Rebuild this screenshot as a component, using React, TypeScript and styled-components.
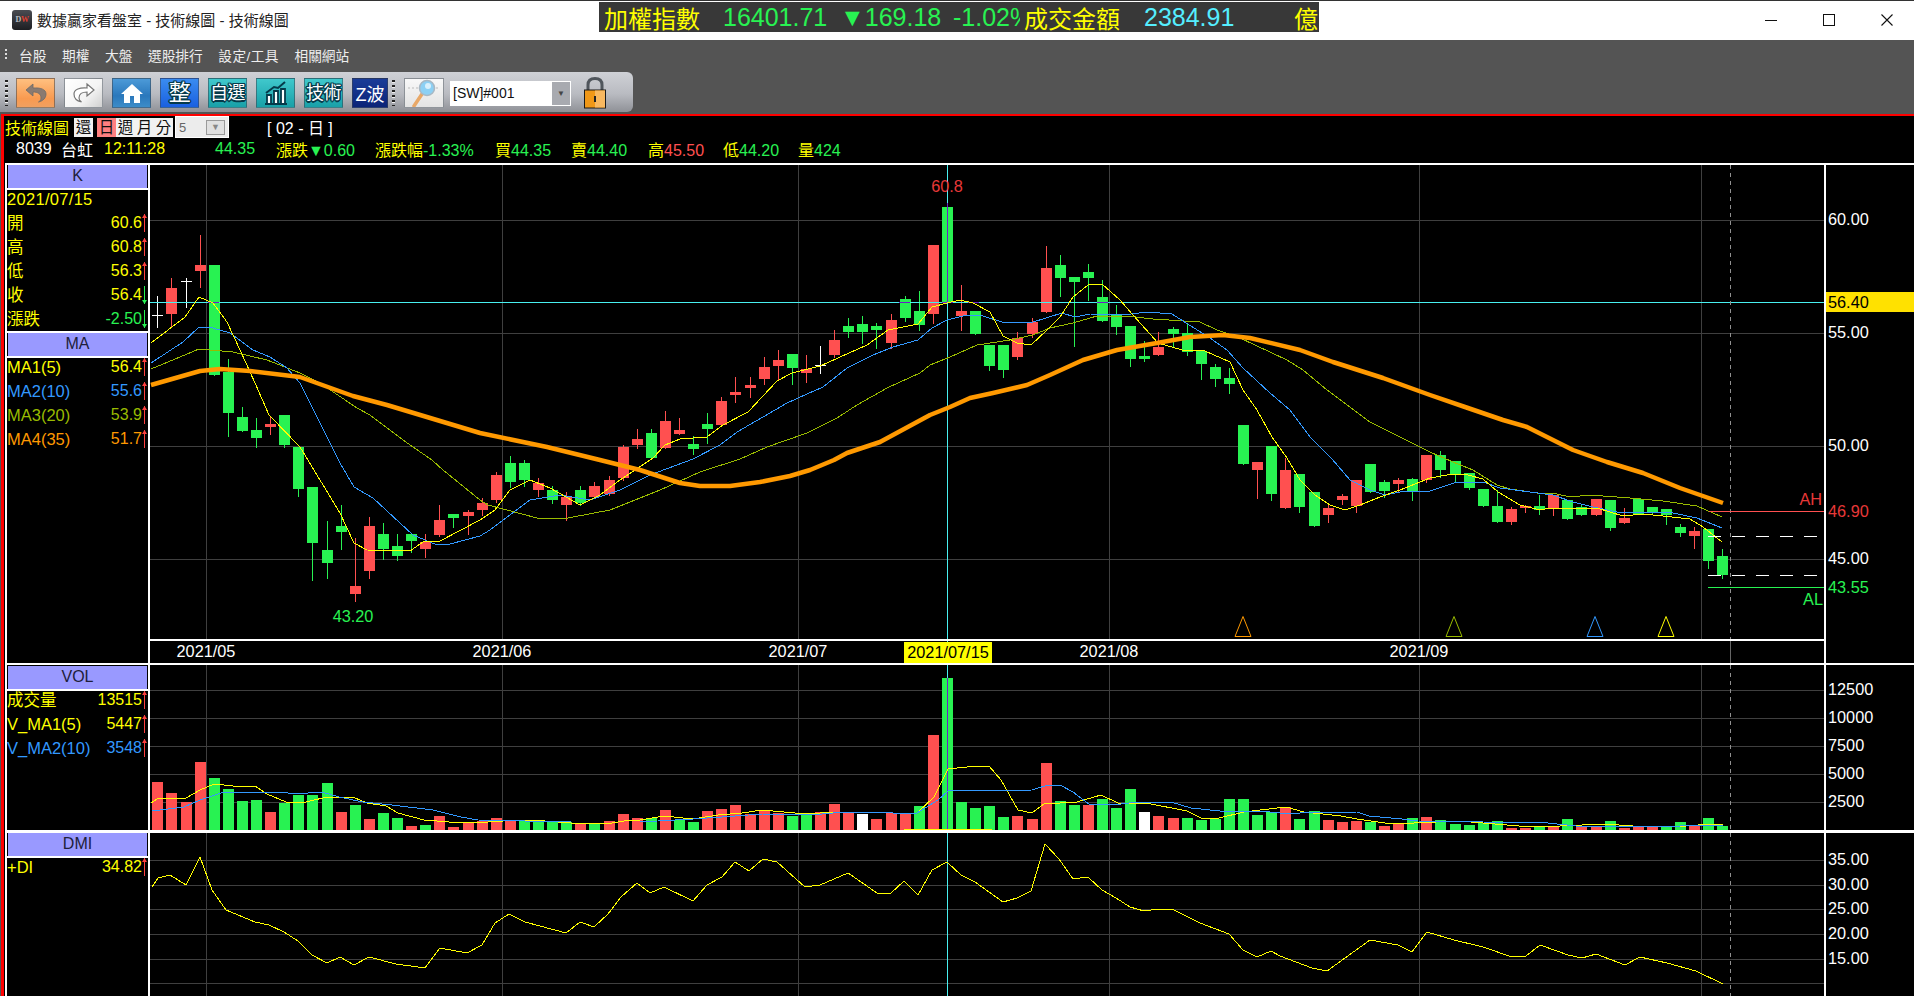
import React from "react";
import styled, { createGlobalStyle } from "styled-components";

const FONT = `"Liberation Sans", "Noto Sans CJK TC", sans-serif`;
const YELLOW = "#ffff00";
const GREEN = "#28f252";
const RED = "#ff5050";
const BLUE = "#3399ff";
const OLIVE = "#99bb00";
const ORANGE = "#ff9900";
const CYAN = "#48f0f0";
const GRID = "#3f3f3f";

const Global = createGlobalStyle`
  html, body { margin: 0; padding: 0; background: #000; }
  body { font-family: ${FONT}; overflow: hidden; }
`;

const Shell = styled.div`
  width: 1914px;
  height: 996px;
  display: flex;
  flex-direction: column;
  overflow: hidden;
  background: #545454;
`;

/* ---- title bar ---- */
const TitleBar = styled.div`
  height: 39px;
  flex: none;
  display: flex;
  background: #fff;
  border-top: 1px solid #333;
  overflow: hidden;
`;
const TitleLeft = styled.div`
  width: 599px;
  flex: none;
  display: flex;
  align-items: center;
  padding-left: 12px;
  padding-bottom: 2px;
  box-sizing: border-box;
  font-size: 15px;
  color: #222;
  gap: 5px;
`;
const Logo = styled.div`
  width: 20px;
  height: 20px;
  border-radius: 3px;
  background: linear-gradient(#4a4c52, #1d1e22);
  display: flex;
  align-items: center;
  justify-content: center;
  font: bold 8px "Liberation Serif", serif;
  color: #b8bcc4;
  letter-spacing: -0.5px;
`;
const LogoW = styled.span`
  color: #e04030;
`;
const Ticker = styled.div`
  width: 720px;
  height: 30px;
  margin-top: 1px;
  flex: none;
  background: #383838;
  display: flex;
  align-items: center;
  padding-left: 5px;
  box-sizing: border-box;
  font-size: 24px;
  overflow: hidden;
  white-space: nowrap;
`;
const TickerCell = styled.div<{ $w: number; $c: string; $num?: boolean; $clip?: number }>`
  width: ${(p) => p.$w}px;
  flex: none;
  color: ${(p) => p.$c};
  overflow: hidden;
  ${(p) => (p.$num ? "font-size: 25px;" : "")}
  ${(p) => (p.$clip ? `padding-right:${p.$clip}px; box-sizing:border-box;` : "")}
`;
const Clip = styled.div`
  overflow: hidden;
`;
const WinButtons = styled.div`
  flex: 1;
  display: flex;
  justify-content: flex-end;
  margin-right: -2px;
`;
const WinButton = styled.div`
  width: 58px;
  display: flex;
  align-items: center;
  justify-content: center;
  padding-bottom: 1px;
`;

/* ---- menu ---- */
const MenuBar = styled.div`
  height: 30px;
  flex: none;
  background: #545454;
  display: flex;
  align-items: center;
  padding-left: 5px;
  color: #eee;
  font-size: 13.7px;
`;
const MenuGrip = styled.div`
  width: 2px;
  height: 12px;
  margin-right: 12px;
  background: repeating-linear-gradient(#ddd 0 2px, transparent 2px 4px);
`;
const MenuItem = styled.div`
  margin-right: 15.6px;
  white-space: nowrap;
`;
const MenuItemWide = styled(MenuItem)`
  letter-spacing: 0.4px;
`;

/* ---- toolbar ---- */
const ToolArea = styled.div`
  height: 44px;
  flex: none;
  padding-top: 2px;
  box-sizing: border-box;
  background: #545454;
  display: flex;
`;
const ToolStrip = styled.div<{ $w: number }>`
  width: ${(p) => p.$w}px;
  height: 40px;
  flex: none;
  display: flex;
  align-items: center;
  box-sizing: border-box;
  padding-top: 2px;
  background: linear-gradient(#cfd1d6, #b9bbc1 55%, #8f9197);
  border-radius: 0 6px 6px 0;
`;
const ToolGrip = styled.div<{ $ml: number; $mr: number }>`
  width: 3px;
  height: 26px;
  flex: none;
  margin-left: ${(p) => p.$ml}px;
  margin-right: ${(p) => p.$mr}px;
  background: repeating-linear-gradient(#222 0 2px, #eee 2px 3px, transparent 3px 5px);
`;
const ToolButton = styled.div<{ $bg: string; $w?: number; $mr?: number }>`
  width: ${(p) => p.$w ?? 39}px;
  height: 30px;
  flex: none;
  box-sizing: border-box;
  background: ${(p) => p.$bg};
  border: 1px solid rgba(60, 70, 80, 0.55);
  display: flex;
  align-items: center;
  justify-content: center;
  margin-right: ${(p) => p.$mr ?? 9}px;
  overflow: hidden;
`;
const ChipText = styled.span<{ $size?: number }>`
  color: #fff;
  font-size: ${(p) => p.$size ?? 18}px;
  line-height: 1;
  letter-spacing: -0.5px;
  text-shadow: -1px -1px 0 #053a4a, 1px -1px 0 #053a4a, -1px 1px 0 #053a4a, 1px 1px 0 #053a4a,
    0 1.5px 0 #053a4a, 0 -1.5px 0 #053a4a, 1.5px 0 0 #053a4a, -1.5px 0 0 #053a4a;
  white-space: nowrap;
`;
const NavyText = styled.span`
  color: #fff;
  font-size: 18px;
  white-space: nowrap;
`;
const Combo = styled.div`
  width: 121px;
  height: 25px;
  flex: none;
  display: flex;
  box-sizing: border-box;
  background: #fff;
  border: 1px solid #fff;
  margin-left: -3px;
  margin-right: 12px;
  font-size: 14px;
  color: #111;
  align-items: center;
  padding-left: 2px;
  justify-content: space-between;
`;
const ComboArrow = styled.div`
  width: 18px;
  height: 100%;
  background: #a8aab0;
  display: flex;
  align-items: center;
  justify-content: center;
  color: #444;
  font-size: 8px;
`;

/* ---- chart window ---- */
const ChartWindow = styled.div`
  flex: 1;
  min-height: 0;
  background: #000;
  border-top: 2px solid #f00;
  border-left: 3px solid #f00;
  margin-left: 1px;
  display: flex;
  flex-direction: column;
`;
const ModeRow = styled.div`
  height: 22px;
  flex: none;
  display: flex;
  align-items: center;
  padding-left: 1px;
  font-size: 16px;
`;
const ModeTitle = styled.div`
  width: 69px;
  flex: none;
  color: ${YELLOW};
`;
const ModeButton = styled.div<{ $on?: boolean; $gap?: number }>`
  width: 19px;
  height: 19px;
  flex: none;
  margin-right: ${(p) => p.$gap ?? 0}px;
  background: ${(p) => (p.$on ? "#ff8080" : "#f2f2f2")};
  color: #111;
  font-size: 15.5px;
  line-height: 19px;
  text-align: center;
  overflow: hidden;
`;
const ModeSelect = styled.div`
  width: 54px;
  height: 22px;
  flex: none;
  margin-left: 2px;
  margin-right: 38px;
  box-sizing: border-box;
  background: #ececec;
  border: 1px solid #fff;
  color: #666;
  font-size: 13px;
  display: flex;
  align-items: center;
  justify-content: space-between;
  padding-left: 3px;
`;
const ModeSelectArrow = styled.div`
  width: 19px;
  height: 15px;
  margin-right: 3px;
  background: #e0e0e0;
  border: 1px solid #9a9a9a;
  box-sizing: border-box;
  color: #888;
  font-size: 9px;
  line-height: 13px;
  text-align: center;
`;
const PeriodLabel = styled.div`
  color: #fff;
`;
const QuoteRow = styled.div`
  height: 25px;
  flex: none;
  display: flex;
  align-items: center;
  padding-left: 12px;
  padding-bottom: 4px;
  box-sizing: border-box;
  font-size: 16px;
  white-space: nowrap;
`;
const QuoteCell = styled.div<{ $w: number; $c: string }>`
  width: ${(p) => p.$w}px;
  flex: none;
  color: ${(p) => p.$c};
`;
const QuoteValue = styled.span<{ $c: string }>`
  color: ${(p) => p.$c};
`;

/* ---- panes ---- */
const Pane = styled.div<{ $h: number; $bt: number }>`
  height: ${(p) => p.$h}px;
  flex: none;
  display: flex;
  box-sizing: border-box;
  border-top: ${(p) => p.$bt}px solid #fff;
  margin-left: 1px;
  overflow: hidden;
`;
const Sidebar = styled.div`
  width: 145px;
  flex: none;
  box-sizing: border-box;
  border-left: 2px solid #fff;
  border-right: 2px solid #fff;
  display: flex;
  flex-direction: column;
  background: #000;
`;
const SectionHead = styled.div<{ $mt?: number }>`
  height: 23px;
  flex: none;
  margin: ${(p) => p.$mt ?? 0}px 1px 0;
  background: #9999ff;
  color: #20203a;
  font-size: 16px;
  line-height: 22px;
  text-align: center;
`;
const SectionRule = styled.div`
  height: 2px;
  flex: none;
  background: #fff;
`;
const Rows = styled.div`
  margin-top: -3px;
  flex: none;
`;
const InfoRow = styled.div`
  height: 24px;
  display: flex;
  align-items: center;
  justify-content: space-between;
  white-space: nowrap;
  overflow: hidden;
`;
const InfoLabel = styled.span<{ $c: string }>`
  color: ${(p) => p.$c};
  font-size: 16.5px;
  line-height: 22px;
`;
const DateLabel = styled(InfoLabel)`
  letter-spacing: 0.3px;
`;
const InfoRight = styled.span`
  display: flex;
  align-items: center;
`;
const InfoValue = styled.span<{ $c: string }>`
  color: ${(p) => p.$c};
  font-size: 16px;
`;
const Plot = styled.svg`
  flex: 1;
  display: block;
  min-width: 0;
`;
const ChartText = styled.text<{ $c?: string }>`
  font-family: ${FONT};
  font-size: 16.3px;
  fill: ${(p) => p.$c ?? "#fff"};
`;
const CHART_X = 150;

/* ---- data ---- */
type C = [number, number, number, number, "r" | "g" | "w"];
const candles: C[] = [
  [315, 315, 296, 327, "w"], [288, 314, 278, 326, "r"], [281, 281, 278, 307, "w"], [265, 271, 235, 287, "r"],
  [265, 375, 265, 375, "g"], [372, 413, 359, 436, "g"], [417, 431, 407, 431, "g"], [430, 438, 418, 447, "g"],
  [424, 427, 416, 434, "r"], [415, 445, 415, 447, "g"], [447, 489, 447, 496, "g"], [487, 543, 487, 580, "g"],
  [550, 563, 521, 578, "g"], [526, 532, 505, 549, "g"], [586, 594, 538, 601, "r"], [526, 571, 517, 578, "r"],
  [534, 549, 523, 559, "g"], [546, 556, 534, 560, "g"], [534, 541, 534, 552, "g"], [542, 549, 534, 557, "r"],
  [520, 535, 505, 536, "r"], [514, 518, 514, 527, "g"], [512, 516, 510, 534, "r"], [503, 510, 498, 515, "r"],
  [475, 500, 472, 502, "r"], [463, 482, 456, 487, "g"], [463, 480, 460, 486, "g"], [483, 490, 478, 496, "r"],
  [490, 500, 486, 503, "g"], [497, 505, 492, 520, "r"], [490, 503, 486, 505, "g"], [486, 497, 482, 498, "r"],
  [480, 494, 476, 495, "r"], [447, 478, 445, 480, "r"], [439, 445, 429, 448, "r"], [433, 458, 429, 458, "g"],
  [421, 448, 411, 448, "r"], [430, 434, 418, 434, "r"], [444, 449, 436, 454, "g"], [424, 429, 413, 443, "g"],
  [401, 425, 397, 425, "r"], [392, 395, 377, 402, "r"], [385, 388, 377, 397, "r"], [367, 379, 357, 384, "r"],
  [360, 366, 350, 379, "r"], [354, 368, 354, 384, "g"], [369, 373, 355, 382, "r"], [365, 365, 346, 373, "w"],
  [340, 355, 330, 357, "r"], [326, 332, 318, 337, "g"], [324, 332, 316, 343, "g"], [326, 330, 323, 348, "g"],
  [320, 343, 314, 348, "r"], [299, 318, 296, 321, "g"], [311, 325, 291, 330, "g"], [245, 314, 245, 323, "r"],
  [207, 303, 203, 303, "g"], [311, 316, 285, 330, "r"], [311, 334, 311, 334, "g"], [345, 366, 345, 370, "g"],
  [345, 370, 345, 377, "g"], [338, 357, 332, 359, "r"], [322, 334, 318, 337, "r"], [268, 312, 246, 312, "r"],
  [265, 278, 255, 296, "g"], [277, 282, 277, 346, "g"], [272, 278, 264, 300, "g"], [297, 321, 280, 321, "g"],
  [314, 327, 305, 334, "g"], [326, 359, 326, 366, "g"], [356, 359, 341, 361, "g"], [347, 355, 332, 355, "r"],
  [329, 334, 327, 346, "g"], [333, 352, 323, 355, "g"], [351, 364, 351, 379, "g"], [367, 379, 364, 386, "g"],
  [378, 384, 368, 393, "g"], [425, 464, 425, 464, "g"], [462, 470, 462, 498, "r"], [446, 494, 446, 500, "g"],
  [470, 508, 458, 508, "r"], [474, 507, 474, 512, "g"], [492, 526, 492, 526, "g"], [508, 515, 504, 522, "r"],
  [496, 500, 494, 504, "r"], [480, 506, 480, 512, "r"], [464, 492, 464, 492, "g"], [482, 491, 480, 497, "g"],
  [480, 484, 478, 492, "r"], [479, 492, 478, 500, "g"], [455, 480, 455, 482, "r"], [455, 470, 451, 477, "g"],
  [461, 474, 461, 481, "g"], [473, 488, 473, 489, "g"], [489, 506, 489, 506, "g"], [506, 522, 490, 522, "g"],
  [509, 522, 507, 524, "r"], [506, 508, 505, 512, "r"], [506, 510, 495, 514, "g"], [495, 509, 495, 515, "r"],
  [500, 519, 500, 519, "g"], [507, 515, 504, 515, "g"], [499, 515, 499, 515, "r"], [500, 528, 500, 530, "g"],
  [518, 523, 508, 523, "r"], [499, 514, 499, 514, "g"], [507, 513, 507, 513, "g"], [509, 515, 509, 524, "g"],
  [527, 533, 524, 536, "g"], [531, 536, 527, 548, "r"], [529, 561, 529, 568, "g"], [556, 575, 549, 578, "g"],
];
const vols: [number, "r" | "g" | "w"][] = (
  "782r 793r 802r 762r 778g 789g 801g 800g 812r 803g 795g 795g 783g 812r 805g 819r 813g 818g 826r 825g 816r 827r 822r 821r " +
  "818r 821r 821g 822g 821g 822g 823r 823g 821r 814r 818r 818g 810r 820g 822g 811r 809r 805r 814r 811r 813r 816g 813g 812r " +
  "804r 812r 814w 819r 813r 814r 806g 735r 678g 802g 808g 806g 817g 816r 819r 763r 801g 805g 805r 799g 808g 789g 812w 816r " +
  "818r 818g 820g 819g 799g 799g 815g 812g 807r 819g 811g 820r 822r 821r 822g 826r 823r 818g 817r 820g 824g 825g 823g 821g " +
  "828r 828r 827g 827r 819g 826r 826r 821g 828r 827r 827r 827g 822g 826r 818g 826g"
)
  .split(" ")
  .map((s) => [parseInt(s, 10), s.slice(-1) as "r" | "g" | "w"]);

const cx = (i: number) => Math.round(157.3 + 14.1 * i);
const colour = (c: string) => (c === "r" ? RED : c === "g" ? GREEN : "#fff");

const ma1 =
  "151,343 185,317 199,297 213,303 227,322 241,352 255,383 269,415 300,447 340,513 354,543 367,550 410,551 423,542 440,541 480,520 495,510 510,490 530,480 550,488 566,497 580,505 600,495 620,480 653,458 665,445 680,439 707,437 723,425 748,412 777,381 792,373 820,366 867,345 888,330 918,324 932,307 947,303 960,300 973,303 990,312 1003,336 1017,343 1031,345 1047,330 1060,317 1073,297 1088,285 1102,284 1120,300 1133,315 1158,343 1182,350 1205,351 1230,362 1243,390 1257,410 1272,437 1287,458 1300,480 1315,495 1330,505 1345,510 1360,505 1380,497 1400,490 1430,478 1453,474 1468,475 1483,479 1498,492 1520,505 1540,510 1550,508 1597,508 1623,516 1643,514 1663,516 1690,519 1703,527 1722,542";
const ma2 =
  "151,363 183,342 199,327 213,328 230,333 253,350 270,357 287,368 300,383 320,423 340,463 354,487 373,498 413,535 437,545 450,544 480,536 490,530 510,515 530,500 560,495 590,500 620,490 650,475 693,459 720,445 737,432 763,417 787,403 807,394 823,387 847,368 873,355 893,347 918,340 932,328 947,320 967,315 983,316 1002,322 1030,323 1062,313 1075,317 1090,314 1123,315 1147,312 1172,314 1183,321 1210,338 1227,350 1243,368 1270,393 1290,410 1310,437 1332,459 1350,480 1370,490 1385,495 1400,492 1430,491 1457,482 1483,482 1500,488 1530,492 1553,495 1573,502 1593,507 1617,512 1647,512 1673,513 1697,518 1722,528";
const ma3 =
  "151,369 180,357 199,349 233,352 267,360 300,373 320,383 357,408 370,415 403,440 413,447 432,460 443,470 480,500 488,505 537,518 568,518 610,510 660,490 700,472 740,459 767,447 807,433 837,418 857,405 887,388 920,373 930,365 950,357 977,345 1010,340 1033,335 1050,328 1073,323 1097,316 1127,316 1153,319 1200,322 1217,330 1240,338 1287,360 1303,370 1327,390 1370,422 1430,452 1453,462 1473,470 1497,485 1510,489 1537,493 1557,494 1570,497 1590,495 1630,498 1663,501 1697,506 1722,517";
const ma4 =
  "151,385 200,371 220,369 250,371 300,377 353,396 387,405 480,433 547,447 600,460 640,470 680,483 700,486 730,486 760,482 790,476 810,470 834,460 847,453 880,442 930,415 950,407 970,398 993,393 1027,385 1050,375 1083,360 1117,350 1157,343 1190,337 1223,335 1250,338 1300,350 1333,362 1383,378 1430,395 1465,407 1503,420 1527,427 1573,450 1607,462 1643,473 1680,488 1723,503";
const vma1 =
  "151,803 157,799 186,798 200,790 214,784 233,786 255,786 267,794 286,802 306,802 327,797 355,798 367,803 386,806 398,813 424,820 449,822 473,823 518,820 545,821 571,823 612,823 624,821 640,820 664,816 693,819 718,815 742,813 762,810 795,813 820,813 852,812 893,813 917,813 934,797 948,769 967,767 989,766 1001,780 1018,810 1032,813 1044,804 1077,802 1101,795 1118,803 1146,803 1187,811 1201,818 1215,819 1244,812 1277,808 1286,807 1304,812 1341,816 1357,819 1385,823 1414,823 1458,821 1483,823 1519,826 1560,826 1605,824 1633,826 1686,826 1710,824 1723,825";
const vma2 =
  "152,811 184,807 200,800 224,792 282,792 294,794 322,792 339,797 363,802 392,805 433,810 461,817 478,820 571,822 640,822 693,819 722,817 762,814 811,815 844,812 869,812 893,813 917,813 938,800 948,791 1032,790 1048,785 1060,785 1073,792 1089,804 1121,804 1138,802 1171,802 1191,808 1220,811 1260,811 1280,813 1300,813 1357,812 1369,816 1402,819 1418,821 1548,823 1576,826 1633,826 1637,827 1724,825";
const di =
  "152,887 158,878 170,875 186,885 200,857 212,890 226,910 255,922 269,925 284,932 298,941 312,955 327,963 340,957 354,965 369,957 396,964 425,968 440,948 467,953 482,945 495,923 509,914 525,922 566,933 580,922 594,927 608,914 621,897 637,883 650,893 664,887 693,901 707,885 722,877 735,862 749,871 763,859 777,862 805,887 820,885 848,873 877,893 890,894 904,881 918,895 932,870 947,862 961,875 975,882 1003,902 1017,898 1031,891 1045,844 1059,859 1073,879 1088,877 1102,890 1116,898 1130,907 1144,911 1158,909 1172,909 1200,923 1229,934 1243,950 1257,957 1271,951 1280,956 1312,968 1327,971 1370,940 1398,945 1412,952 1427,932 1454,940 1483,947 1512,957 1526,956 1540,945 1568,955 1582,958 1596,954 1625,965 1640,957 1667,963 1696,971 1723,984";

const VGRID = [206, 502, 798, 1109, 1419, 1701];
const PLOT_R = 1824;

function VerticalGrid({ y1, y2 }: { y1: number; y2: number }) {
  return (
    <>
      {VGRID.map((x) => (
        <rect key={x} x={x} y={y1} width={1} height={y2 - y1} fill={GRID} />
      ))}
    </>
  );
}
function HorizontalGrid({ ys }: { ys: number[] }) {
  return (
    <>
      {ys.map((y) => (
        <rect key={y} x={CHART_X} y={y} width={PLOT_R - CHART_X} height={1} fill={GRID} />
      ))}
    </>
  );
}
function Cursor({ y1, y2 }: { y1: number; y2: number }) {
  return (
    <>
      <rect x={947} y={y1} width={1} height={y2 - y1} fill={CYAN} />
      <line x1={1730.5} x2={1730.5} y1={y1} y2={y2} stroke="#909090" strokeDasharray="4 4" />
    </>
  );
}
function Line({ pts, c, w = 1 }: { pts: string; c: string; w?: number }) {
  return <polyline points={pts} fill="none" stroke={c} strokeWidth={w} strokeLinejoin="round" shapeRendering={w > 2 ? undefined : "crispEdges"} />;
}
function Triangle({ x, c }: { x: number; c: string }) {
  return <polygon points={`${x},616.5 ${x + 8},636.5 ${x - 8},636.5`} fill="none" stroke={c} strokeWidth={1} />;
}

function PriceChart() {
  return (
    <Plot viewBox={`${CHART_X} 165 1764 498`} width={1764} height={498}>
      <HorizontalGrid ys={[220, 333, 446, 559]} />
      <VerticalGrid y1={165} y2={639} />
      <g shapeRendering="crispEdges">
        {candles.map((d, i) => (
          <g key={i}>
            <rect x={cx(i)} y={d[2]} width={1} height={d[3] - d[2] + 1} fill={colour(d[4])} />
            <rect x={cx(i) - 5} y={d[0]} width={11} height={Math.max(1, d[1] - d[0])} fill={colour(d[4])} />
          </g>
        ))}
      </g>
      <rect x={CHART_X} y={302} width={PLOT_R - CHART_X} height={1} fill={CYAN} />
      <rect x={208} y={302} width={11} height={1} fill="#6a20c8" />
      <rect x={899} y={302} width={11} height={1} fill="#6a20c8" />
      <rect x={942} y={302} width={11} height={1} fill="#6a20c8" />
      <rect x={968} y={302} width={11} height={1} fill="#6a20c8" />
      <rect x={1097} y={302} width={11} height={1} fill="#6a20c8" />
      <Cursor y1={165} y2={639} />
      <rect x={947} y={203} width={1} height={100} fill="#6a20c8" />
      <Line pts={ma3} c={OLIVE} />
      <Line pts={ma2} c={BLUE} />
      <Line pts={ma1} c={YELLOW} />
      <Line pts={ma4} c={ORANGE} w={4.5} />

      <rect x={1709} y={511} width={115} height={1} fill={RED} />
      <rect x={1708} y={587} width={116} height={1} fill={GREEN} />
      <line x1={1708} x2={1822} y1={536.5} y2={536.5} stroke="#fff" strokeDasharray="13 11" />
      <line x1={1708} x2={1822} y1={575.5} y2={575.5} stroke="#fff" strokeDasharray="13 11" />

      <Triangle x={1243} c={ORANGE} />
      <Triangle x={1454} c={OLIVE} />
      <Triangle x={1595} c={BLUE} />
      <Triangle x={1666} c={YELLOW} />

      <ChartText x={947} y={192} textAnchor="middle" $c="#e83838">60.8</ChartText>
      <ChartText x={353} y={622} textAnchor="middle" $c={GREEN}>43.20</ChartText>
      <ChartText x={1822} y={505} textAnchor="end" $c="#e83838">AH</ChartText>
      <ChartText x={1823} y={605} textAnchor="end" $c={GREEN}>AL</ChartText>

      {/* axis */}
      <rect x={CHART_X} y={639} width={1674} height={2} fill="#fff" />
      <rect x={PLOT_R} y={165} width={2} height={498} fill="#fff" />
      <rect x={1826} y={292} width={88} height={20} fill="#ffe100" />
      <ChartText x={1828} y={225}>60.00</ChartText>
      <ChartText x={1828} y={338}>55.00</ChartText>
      <ChartText x={1828} y={451}>50.00</ChartText>
      <ChartText x={1828} y={564}>45.00</ChartText>
      <ChartText x={1828} y={308} $c="#000">56.40</ChartText>
      <ChartText x={1828} y={517} $c="#e83838">46.90</ChartText>
      <ChartText x={1828} y={593} $c={GREEN}>43.55</ChartText>

      <ChartText x={206} y={657} textAnchor="middle">2021/05</ChartText>
      <ChartText x={502} y={657} textAnchor="middle">2021/06</ChartText>
      <ChartText x={798} y={657} textAnchor="middle">2021/07</ChartText>
      <ChartText x={1109} y={657} textAnchor="middle">2021/08</ChartText>
      <ChartText x={1419} y={657} textAnchor="middle">2021/09</ChartText>
      <rect x={904} y={642} width={88} height={21} fill="#ffff00" />
      <rect x={947} y={641} width={1} height={1} fill={CYAN} />
      <ChartText x={948} y={658} textAnchor="middle" $c="#000">2021/07/15</ChartText>
      <rect x={1730} y={641} width={1} height={22} fill="#666" />
    </Plot>
  );
}

function VolumeChart() {
  return (
    <Plot viewBox={`${CHART_X} 665 1764 165`} width={1764} height={165}>
      <HorizontalGrid ys={[690, 718, 746, 774, 802]} />
      <VerticalGrid y1={665} y2={830} />
      <Cursor y1={665} y2={830} />
      <g shapeRendering="crispEdges">
        {vols.map(([top, c], i) => (
          <rect key={i} x={cx(i) - 5} y={top} width={11} height={830 - top} fill={colour(c)} />
        ))}
      </g>
      <rect x={947} y={678} width={1} height={152} fill="#6a20c8" />
      <Line pts={vma1} c={YELLOW} />
      <Line pts={vma2} c={BLUE} />
      <rect x={904} y={829} width={88} height={1} fill="#ffff00" />
      <rect x={PLOT_R} y={665} width={2} height={165} fill="#fff" />
      <ChartText x={1828} y={695}>12500</ChartText>
      <ChartText x={1828} y={723}>10000</ChartText>
      <ChartText x={1828} y={751}>7500</ChartText>
      <ChartText x={1828} y={779}>5000</ChartText>
      <ChartText x={1828} y={807}>2500</ChartText>
    </Plot>
  );
}

function DmiChart() {
  return (
    <Plot viewBox={`${CHART_X} 833 1764 163`} width={1764} height={163}>
      <HorizontalGrid ys={[860, 885, 909, 934, 959, 983]} />
      <VerticalGrid y1={833} y2={996} />
      <Cursor y1={833} y2={996} />
      <Line pts={di} c={YELLOW} />
      <rect x={PLOT_R} y={833} width={2} height={163} fill="#fff" />
      <ChartText x={1828} y={865}>35.00</ChartText>
      <ChartText x={1828} y={890}>30.00</ChartText>
      <ChartText x={1828} y={914}>25.00</ChartText>
      <ChartText x={1828} y={939}>20.00</ChartText>
      <ChartText x={1828} y={964}>15.00</ChartText>
    </Plot>
  );
}

/* ---- small pieces ---- */
function Trend({ up }: { up: boolean }) {
  const c = up ? "#ff4040" : GREEN;
  return (
    <svg width={6} height={18} viewBox="0 0 6 18">
      <rect x={2} y={0} width={1} height={18} fill={c} />
      {up ? <path d="M0 4 L2.5 0 L5 4 Z" fill={c} /> : <path d="M0 14 L2.5 18 L5 14 Z" fill={c} />}
    </svg>
  );
}

function Info({ label, value, lc = YELLOW, vc = YELLOW, up = true }: { label: string; value: string; lc?: string; vc?: string; up?: boolean }) {
  return (
    <InfoRow>
      <InfoLabel $c={lc}>{label}</InfoLabel>
      <InfoRight>
        <InfoValue $c={vc}>{value}</InfoValue>
        <Trend up={up} />
      </InfoRight>
    </InfoRow>
  );
}

function App() {
  return (
    <Shell>
      <Global />
      <TitleBar>
        <TitleLeft>
          <Logo>
            D<LogoW>W</LogoW>
          </Logo>
          數據贏家看盤室 - 技術線圖 - 技術線圖
        </TitleLeft>
        <Ticker>
          <TickerCell $w={119} $c={YELLOW}>加權指數</TickerCell>
          <TickerCell $w={117} $c={GREEN} $num>16401.71</TickerCell>
          <TickerCell $w={113} $c={GREEN} $num>▼169.18</TickerCell>
          <TickerCell $w={71} $c={GREEN} $num $clip={4}><Clip>-1.02%</Clip></TickerCell>
          <TickerCell $w={120} $c={YELLOW}>成交金額</TickerCell>
          <TickerCell $w={150} $c="#55eeff" $num>2384.91</TickerCell>
          <TickerCell $w={24} $c={YELLOW}>億</TickerCell>
        </Ticker>
        <WinButtons>
          <WinButton>
            <svg width={12} height={12} viewBox="0 0 12 12"><rect x={0} y={6} width={12} height={1} fill="#111" /></svg>
          </WinButton>
          <WinButton>
            <svg width={12} height={12} viewBox="0 0 12 12"><rect x={0.5} y={0.5} width={11} height={11} fill="none" stroke="#111" /></svg>
          </WinButton>
          <WinButton>
            <svg width={12} height={12} viewBox="0 0 12 12"><path d="M0.5 0.5 L11.5 11.5 M11.5 0.5 L0.5 11.5" stroke="#111" strokeWidth={1.1} /></svg>
          </WinButton>
        </WinButtons>
      </TitleBar>

      <MenuBar>
        <MenuGrip />
        <MenuItem>台股</MenuItem>
        <MenuItem>期權</MenuItem>
        <MenuItem>大盤</MenuItem>
        <MenuItem>選股排行</MenuItem>
        <MenuItemWide>設定/工具</MenuItemWide>
        <MenuItem>相關網站</MenuItem>
      </MenuBar>

      <ToolArea>
        <ToolStrip $w={633}>
          <ToolGrip $ml={5} $mr={8} />
          <ToolButton $bg="linear-gradient(#ffc080, #f89a50 70%, #f0a060)">
            <svg width={26} height={24} viewBox="0 0 26 24">
              <path d="M10 3 L3 9 L10 15 L10 11 C15 11 18 13 18 17 C18 19 17 20 15.5 21 C20 20 23 17 23 13 C23 8 17 6.5 10 7 Z" fill="#8a7a70" stroke="#6a6a6a" strokeWidth={0.8} />
            </svg>
          </ToolButton>
          <ToolButton $bg="linear-gradient(135deg, #fff, #f4f4f4 60%, #d0d0d0)">
            <svg width={26} height={24} viewBox="0 0 26 24">
              <path d="M16 3 L23 9 L16 15 L16 11 C11 11 8 13 8 17 C8 19 9 20 10.5 21 C6 20 3 17 3 13 C3 8 9 6.5 16 7 Z" fill="#fff" stroke="#777" strokeWidth={1.2} />
            </svg>
          </ToolButton>
          <ToolButton $bg="linear-gradient(#4c9ad8, #2a78bc 60%, #3c8cc8)">
            <svg width={24} height={22} viewBox="0 0 24 22">
              <path d="M12 2 L23 12 L20 12 L20 21 L14 21 L14 14 L10 14 L10 21 L4 21 L4 12 L1 12 Z" fill="#fff" />
            </svg>
          </ToolButton>
          <ToolButton $bg="linear-gradient(#3a8cf0, #1a60e0)"><ChipText $size={22}>整</ChipText></ToolButton>
          <ToolButton $bg="linear-gradient(#40c8cc, #18a0a8)"><ChipText>自選</ChipText></ToolButton>
          <ToolButton $bg="linear-gradient(#40c8cc, #18a0a8)">
            <svg width={28} height={26} viewBox="0 0 28 26">
              <path d="M5 24 L5 15 L9 15 L9 24 M12 24 L12 11 L16 11 L16 24 M19 24 L19 9 L23 9 L23 24 M3 24 L25 24" fill="#fff" stroke="#053a4a" strokeWidth={1.8} />
              <path d="M4 13 L12 7 L16 8 L23 2" fill="none" stroke="#053a4a" strokeWidth={2} />
            </svg>
          </ToolButton>
          <ToolButton $bg="linear-gradient(#40c8cc, #18a0a8)"><ChipText>技術</ChipText></ToolButton>
          <ToolButton $bg="linear-gradient(#1a3c98, #0c2478)" $w={36} $mr={4}><NavyText>Z波</NavyText></ToolButton>
          <ToolGrip $ml={0} $mr={9} />
          <ToolButton $bg="linear-gradient(#f8f8f8, #e4e4e4)" $w={40}>
            <svg width={32} height={28} viewBox="0 0 32 28">
              <path d="M0 9 H32" stroke="#bbb" strokeDasharray="2 2" />
              <path d="M6 27 L14 15" stroke="#e8a868" strokeWidth={3.5} strokeLinecap="round" />
              <circle cx={19} cy={9} r={7.5} fill="#8cd0f4" stroke="#a8b8c4" strokeWidth={1.6} />
              <circle cx={20} cy={7} r={3} fill="#d8f0fc" />
            </svg>
          </ToolButton>
          <Combo>
            [SW]#001
            <ComboArrow>▼</ComboArrow>
          </Combo>
          <svg width={24} height={32} viewBox="0 0 24 32">
            <path d="M5 14 V8 C5 3.5 8 1.5 12 1.5 C16 1.5 19 3.5 19 8 V14" fill="none" stroke="#50565c" strokeWidth={3} />
            <rect x={1.5} y={13} width={21} height={18} fill="#f09818" stroke="#1a1a1a" />
            <rect x={12} y={13.5} width={10} height={17} fill="#f8b860" />
            <rect x={11} y={19} width={2} height={6} fill="#222" />
          </svg>
        </ToolStrip>
      </ToolArea>

      <ChartWindow>
        <ModeRow>
          <ModeTitle>技術線圖</ModeTitle>
          <ModeButton $gap={4}>還</ModeButton>
          <ModeButton $on>日</ModeButton>
          <ModeButton>週</ModeButton>
          <ModeButton>月</ModeButton>
          <ModeButton>分</ModeButton>
          <ModeSelect>
            5
            <ModeSelectArrow>▼</ModeSelectArrow>
          </ModeSelect>
          <PeriodLabel>[ 02 - 日 ]</PeriodLabel>
        </ModeRow>
        <QuoteRow>
          <QuoteCell $w={45} $c="#fff">8039</QuoteCell>
          <QuoteCell $w={43} $c="#fff">台虹</QuoteCell>
          <QuoteCell $w={111} $c={YELLOW}>12:11:28</QuoteCell>
          <QuoteCell $w={61} $c={GREEN}>44.35</QuoteCell>
          <QuoteCell $w={99} $c={YELLOW}>漲跌<QuoteValue $c={GREEN}>▼0.60</QuoteValue></QuoteCell>
          <QuoteCell $w={120} $c={YELLOW}>漲跌幅<QuoteValue $c={GREEN}>-1.33%</QuoteValue></QuoteCell>
          <QuoteCell $w={76} $c={YELLOW}>買<QuoteValue $c={GREEN}>44.35</QuoteValue></QuoteCell>
          <QuoteCell $w={77} $c={YELLOW}>賣<QuoteValue $c={GREEN}>44.40</QuoteValue></QuoteCell>
          <QuoteCell $w={75} $c={YELLOW}>高<QuoteValue $c={RED}>45.50</QuoteValue></QuoteCell>
          <QuoteCell $w={75} $c={YELLOW}>低<QuoteValue $c={GREEN}>44.20</QuoteValue></QuoteCell>
          <QuoteCell $w={70} $c={YELLOW}>量<QuoteValue $c={GREEN}>424</QuoteValue></QuoteCell>
        </QuoteRow>

        <Pane $h={500} $bt={2}>
          <Sidebar>
            <SectionHead>K</SectionHead>
            <SectionRule />
            <Rows>
              <InfoRow><DateLabel $c={YELLOW}>2021/07/15</DateLabel></InfoRow>
              <Info label="開" value="60.6" />
              <Info label="高" value="60.8" />
              <Info label="低" value="56.3" />
              <Info label="收" value="56.4" up={false} />
              <Info label="漲跌" value="-2.50" vc={GREEN} up={false} />
            </Rows>
            <SectionRule />
            <SectionHead>MA</SectionHead>
            <SectionRule />
            <Rows>
              <Info label="MA1(5)" value="56.4" />
              <Info label="MA2(10)" value="55.6" lc={BLUE} vc={BLUE} />
              <Info label="MA3(20)" value="53.9" lc={OLIVE} vc={OLIVE} />
              <Info label="MA4(35)" value="51.7" lc={ORANGE} vc={ORANGE} />
            </Rows>
          </Sidebar>
          <PriceChart />
        </Pane>
        <Pane $h={167} $bt={2}>
          <Sidebar>
            <SectionHead $mt={1}>VOL</SectionHead>
            <SectionRule />
            <Rows>
              <Info label="成交量" value="13515" />
              <Info label="V_MA1(5)" value="5447" />
              <Info label="V_MA2(10)" value="3548" lc={BLUE} vc={BLUE} />
            </Rows>
          </Sidebar>
          <VolumeChart />
        </Pane>
        <Pane $h={166} $bt={3}>
          <Sidebar>
            <SectionHead>DMI</SectionHead>
            <SectionRule />
            <Rows>
              <Info label="+DI" value="34.82" />
            </Rows>
          </Sidebar>
          <DmiChart />
        </Pane>
      </ChartWindow>
    </Shell>
  );
}

export default App;
